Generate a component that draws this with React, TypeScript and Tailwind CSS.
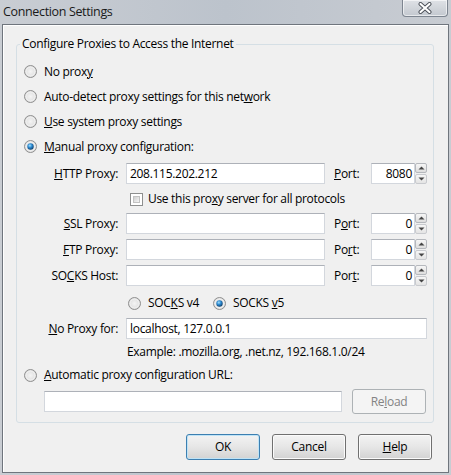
import type { ReactNode } from "react";

const FONT = "font-['Open_Sans','Noto_Sans',sans-serif]";

function Radio({ checked }: { checked?: boolean }) {
  return (
    <svg width="13" height="13" viewBox="0 0 13 13" className="shrink-0">
      <defs>
        <radialGradient id="radioBg" cx="50%" cy="50%" r="50%">
          <stop offset="0%" stopColor="#f4f4f4" />
          <stop offset="70%" stopColor="#e4e4e4" />
          <stop offset="100%" stopColor="#cfcfcf" />
        </radialGradient>
        <radialGradient id="radioDot" cx="40%" cy="35%" r="70%">
          <stop offset="0%" stopColor="#a6e1fb" />
          <stop offset="45%" stopColor="#2c8ad2" />
          <stop offset="100%" stopColor="#0d3a63" />
        </radialGradient>
      </defs>
      <circle cx="6.5" cy="6.5" r="6" fill="url(#radioBg)" stroke="#909090" strokeWidth="1" />
      <circle cx="6.5" cy="6.5" r="4.6" fill="none" stroke="#ffffff" strokeOpacity="0.7" strokeWidth="0.8" />
      {checked && <circle cx="6.5" cy="6.5" r="3.2" fill="url(#radioDot)" />}
    </svg>
  );
}

function Checkbox() {
  return (
    <div className="h-[13px] w-[13px] shrink-0 border border-[#8e8f8f] bg-white p-[2px]">
      <div className="h-full w-full border border-[#c2c2c2] bg-linear-to-br from-[#cfcfcf] to-[#f6f6f6]" />
    </div>
  );
}

function TextBox({ value, className }: { value?: string; className: string }) {
  return (
    <div
      className={`flex h-[21px] items-center border border-[#d3d7dd] border-t-[#adb1b8] bg-white px-[3px] ${className}`}
    >
      {value}
    </div>
  );
}

function Arrow({ up }: { up?: boolean }) {
  return (
    <svg width="7" height="4" viewBox="0 0 7 4">
      <path d={up ? "M0.5 3.5 L3.5 0.5 L6.5 3.5 Z" : "M0.5 0.5 L3.5 3.5 L6.5 0.5 Z"} fill="#444" />
    </svg>
  );
}

function PortBox({ value }: { value: string }) {
  return (
    <div className="flex h-[21px] items-stretch">
      <div className="flex w-[44px] items-center justify-end border border-[#d3d7dd] border-t-[#adb1b8] bg-white px-[2px]">
        {value}
      </div>
      <div className="flex w-[12px] flex-col gap-[1px]">
        <div className="flex flex-1 items-center justify-center rounded-[2px] border border-[#b5b8bd] bg-linear-to-b from-[#f6f6f6] to-[#dedede]">
          <Arrow up />
        </div>
        <div className="flex flex-1 items-center justify-center rounded-[2px] border border-[#c8cace] bg-linear-to-b from-[#f6f6f6] to-[#e4e4e4]">
          <Arrow />
        </div>
      </div>
    </div>
  );
}

function ProxyRow({
  label,
  value,
  portLabel,
  port,
  className,
}: {
  label: ReactNode;
  value?: string;
  portLabel: ReactNode;
  port: string;
  className: string;
}) {
  return (
    <div className={`flex h-[21px] items-center ${className}`}>
      <div className="w-[101px] text-right">{label}</div>
      <TextBox value={value} className="ml-[8px] w-[199px]" />
      <div className="ml-[9px] w-[37px]">{portLabel}</div>
      <PortBox value={port} />
    </div>
  );
}

function RadioRow({ checked, children }: { checked?: boolean; children: ReactNode }) {
  return (
    <div className="ml-[7px] flex h-[25px] items-center gap-[7px]">
      <Radio checked={checked} />
      <span>{children}</span>
    </div>
  );
}

function Button({ children, primary }: { children: ReactNode; primary?: boolean }) {
  return (
    <div
      className={`flex h-[26px] w-[74px] items-center justify-center rounded-[3px] border bg-linear-to-b from-[#f3f3f3] via-[#e6e6e6] to-[#d2d2d2] ${
        primary
          ? "border-[#3c7fb1] shadow-[inset_0_0_0_1px_#bfe3f6]"
          : "border-[#707070] shadow-[inset_0_0_0_1px_#fbfbfb]"
      }`}
    >
      {children}
    </div>
  );
}

export default function App() {
  return (
    <div
      className={`relative h-[475px] w-[451px] overflow-hidden bg-linear-to-r from-[#c9cdd3] via-[#bcc3cc] to-[#c8ccd2] text-[12px] leading-[16px] tracking-[-0.3px] text-black ${FONT}`}
    >
      {/* title bar */}
      <div className="flex h-[24px] items-start justify-between">
        <div className="pl-[3px] pt-[3px] text-[12.5px] leading-[18px] tracking-[-0.35px] text-[#1a1a1a]">
          Connection Settings
        </div>
        <div className="mr-[3px] flex h-[17px] w-[46px] items-center justify-center rounded-b-[4px] border border-t-0 border-[#7d8590] bg-linear-to-b from-[#dfe2e6] to-[#c3c8cf] shadow-[inset_0_0_0_1px_rgba(255,255,255,0.6)]">
          <svg width="14" height="12" viewBox="0 0 14 12">
            <path
              d="M2.5 2 L11.5 10 M11.5 2 L2.5 10"
              stroke="#4a4f57"
              strokeWidth="4"
              strokeLinecap="round"
            />
            <path
              d="M2.5 2 L11.5 10 M11.5 2 L2.5 10"
              stroke="#ffffff"
              strokeWidth="2.2"
              strokeLinecap="round"
            />
          </svg>
        </div>
      </div>

      {/* client area */}
      <div className="mx-[2px] flex h-[449px] flex-col border border-[#6f757d] bg-[#f0f0f0] shadow-[inset_1px_1px_0_#ffffff]">
        <fieldset className="ml-[13px] mt-[11px] w-[418px] rounded-[3px] border border-[#d5dfe5] pb-[8px]">
          <legend className="ml-[3px] px-[2px] leading-[16px]">Configure Proxies to Access the Internet</legend>
          <div className="mt-[7px]">
            <RadioRow>
              No prox<u>y</u>
            </RadioRow>
            <RadioRow>
              Auto-detect proxy settings for this net<u>w</u>ork
            </RadioRow>
            <RadioRow>
              <u>U</u>se system proxy settings
            </RadioRow>
            <RadioRow checked>
              <u>M</u>anual proxy configuration:
            </RadioRow>
          </div>

          <ProxyRow
            className="mt-[4px]"
            label={
              <>
                <u>H</u>TTP Proxy:
              </>
            }
            value="208.115.202.212"
            portLabel={
              <>
                <u>P</u>ort:
              </>
            }
            port="8080"
          />

          <div className="ml-[113px] mt-[4px] flex h-[22px] items-center gap-[5px]">
            <Checkbox />
            <span>
              Use this pro<u>x</u>y server for all protocols
            </span>
          </div>

          <ProxyRow
            className="mt-[3px]"
            label={
              <>
                <u>S</u>SL Proxy:
              </>
            }
            portLabel={
              <>
                P<u>o</u>rt:
              </>
            }
            port="0"
          />
          <ProxyRow
            className="mt-[5px]"
            label={
              <>
                <u>F</u>TP Proxy:
              </>
            }
            portLabel={
              <>
                Po<u>r</u>t:
              </>
            }
            port="0"
          />
          <ProxyRow
            className="mt-[5px]"
            label={
              <>
                SO<u>C</u>KS Host:
              </>
            }
            portLabel={
              <>
                Por<u>t</u>:
              </>
            }
            port="0"
          />

          <div className="ml-[111px] mt-[6px] flex h-[22px] items-center">
            <div className="flex w-[85px] items-center gap-[7px]">
              <Radio />
              <span>
                SOC<u>K</u>S v4
              </span>
            </div>
            <div className="flex items-center gap-[7px]">
              <Radio checked />
              <span>
                SOCKS <u>v</u>5
              </span>
            </div>
          </div>

          <div className="mt-[4px] flex h-[21px] items-center">
            <div className="w-[101px] text-right">
              <u>N</u>o Proxy for:
            </div>
            <TextBox value="localhost, 127.0.0.1" className="ml-[8px] w-[301px]" />
          </div>

          <div className="ml-[110px] mt-[4px] flex h-[18px] items-center">
            Example: .mozilla.org, .net.nz, 192.168.1.0/24
          </div>

          <div className="ml-[7px] mt-[2px] flex h-[24px] items-center gap-[7px]">
            <Radio />
            <span>
              <u>A</u>utomatic proxy configuration URL:
            </span>
          </div>

          <div className="mt-[2px] flex h-[25px] items-center">
            <TextBox className="ml-[27px] w-[298px]" />
            <div className="ml-[10px] flex h-[25px] w-[74px] items-center justify-center rounded-[3px] border border-[#adb2b5] bg-[#f4f4f4] text-[#838383]">
              Re<u>l</u>oad
            </div>
          </div>
        </fieldset>

        <div className="mt-[11px] flex justify-end gap-[12px] pr-[16px]">
          <Button primary>OK</Button>
          <Button>Cancel</Button>
          <Button>
            <u>H</u>elp
          </Button>
        </div>
      </div>
    </div>
  );
}
